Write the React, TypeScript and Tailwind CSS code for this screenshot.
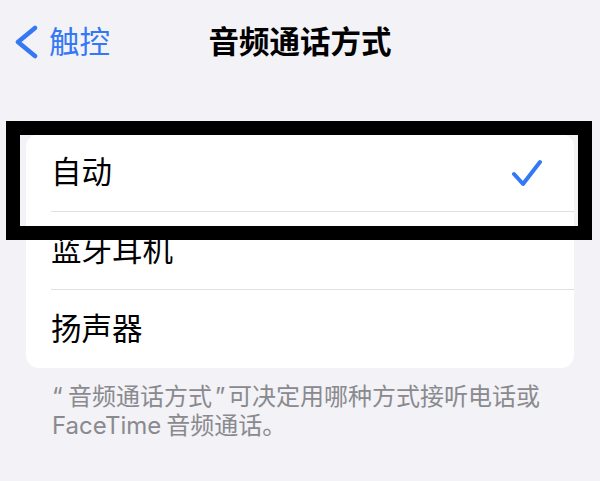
const options = [
  { label: "自动", checked: true },
  { label: "蓝牙耳机", checked: false },
  { label: "扬声器", checked: false },
];

const font = { fontFamily: 'Inter, "Noto Sans CJK SC", sans-serif' };

const App = () => {
  return (
    <div className="relative w-[600px] h-[481px] overflow-hidden bg-[#f2f2f7]" style={font}>
      {/* nav bar */}
      <div className="grid grid-cols-[1fr_auto_1fr] items-center h-[84px]">
        <div className="flex items-center pl-[14px]">
          <svg width="24" height="34" viewBox="0 0 24 34" className="shrink-0">
            <path d="M21 3 L4 17 L21 31" fill="none" stroke="#3478f6" strokeWidth="4.5" strokeLinecap="round" strokeLinejoin="round" />
          </svg>
          <span className="ml-[11px] text-[30.5px] leading-none text-[#3478f6]">触控</span>
        </div>
        <h1 className="text-[30.5px] leading-none font-semibold text-black">音频通话方式</h1>
        <div />
      </div>

      {/* options card */}
      <div className="mx-[26px] mt-[50px] bg-white rounded-[13px] overflow-hidden">
        {options.map((opt, i) => (
          <div key={i} className="pl-[25px]">
            <div
              className={`flex items-center justify-between h-[78px] pr-[32px] ${
                i < options.length - 1 ? "border-b border-[#e0e0e4]" : ""
              }`}
            >
              <span className="text-[30.5px] leading-none text-black">{opt.label}</span>
              {opt.checked && (
                <svg width="30" height="28" viewBox="0 0 30 28">
                  <path d="M2 15 L11 25 L28 3" fill="none" stroke="#3478f6" strokeWidth="4" strokeLinecap="round" strokeLinejoin="round" />
                </svg>
              )}
            </div>
          </div>
        ))}
      </div>

      {/* footer note */}
      <p className="mx-[52px] mt-[14px] text-[24px] leading-[29px] text-[#8a8a8e] whitespace-nowrap">
        <span className="inline-block w-[16px]">“</span>音频通话方式<span className="inline-block w-[16px] text-center">”</span>可决定用哪种方式接听电话或
        <br />
        FaceTime<span className="ml-[5px]">音频通话。</span>
      </p>

      {/* highlight annotation */}
      <div className="absolute left-[6px] top-[121px] w-[586px] h-[119px] border-[14px] border-black pointer-events-none" />
    </div>
  );
};

export default App;
